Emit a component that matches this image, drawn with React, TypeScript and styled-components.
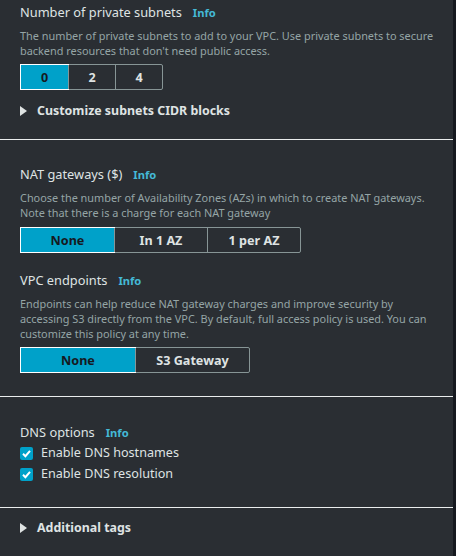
import * as React from 'react';
import styled, { createGlobalStyle } from 'styled-components';

const GlobalStyle = createGlobalStyle`
    html, body {
        margin: 0;
        padding: 0;
        background-color: #2a2e33;
    }
    body {
        font-family: "Noto Sans", "Open Sans", sans-serif;
        color: #d5dbdb;
    }
`

const Page = styled.div`
    width: 453px;
    min-height: 556px;
    border-right: 3px solid #16191f;
    background-color: #2a2e33;
`

const Section = styled.div<{ $top: number; $bottom: number }>`
    padding: ${p => p.$top}px 14px ${p => p.$bottom}px 20px;
`

const Divider = styled.div`
    height: 1px;
    background-color: #eaeded;
`

const Field = styled.div<{ $gap?: number }>`
    margin-top: ${p => p.$gap || 0}px;
`

const Label = styled.div`
    display: flex;
    align-items: baseline;
    font-size: 12.8px;
    line-height: 19px;
    height: 19px;
    color: #dfe3e3;
`

const Info = styled.span`
    margin-left: 11px;
    font-size: 11.2px;
    font-weight: 700;
    color: #44b9d6;
`

const Description = styled.div`
    margin-top: 6px;
    font-size: 10.9px;
    line-height: 15px;
    color: #95a5a6;
`

const SegmentGroup = styled.div<{ $gap: number }>`
    display: inline-flex;
    margin-top: ${p => p.$gap}px;
    border: 1px solid #879596;
    border-radius: 2px;
`

const Segment = styled.div<{ $width: number; $selected?: boolean }>`
    box-sizing: border-box;
    width: ${p => p.$width}px;
    height: 24px;
    display: flex;
    align-items: center;
    justify-content: center;
    font-size: 12.6px;
    font-weight: 700;
    color: ${p => (p.$selected ? '#16191f' : '#dfe3e3')};
    background-color: ${p => (p.$selected ? '#00a1c9' : 'transparent')};
    outline: ${p => (p.$selected ? '1px solid #ffffff' : 'none')};
    & + & {
        border-left: 1px solid #879596;
    }
`

const Expander = styled.div<{ $gap: number }>`
    margin-top: ${p => p.$gap}px;
    display: flex;
    align-items: center;
    gap: 10px;
    font-size: 12.4px;
    line-height: 19px;
    font-weight: 700;
    color: #dfe3e3;
`

const Caret = styled.span`
    width: 0;
    height: 0;
    border-top: 5px solid transparent;
    border-bottom: 5px solid transparent;
    border-left: 7px solid #dfe3e3;
`

const CheckRow = styled.label`
    display: flex;
    align-items: center;
    gap: 8px;
    margin-top: 1px;
    font-size: 12.6px;
    line-height: 20px;
    color: #dfe3e3;
`

const Box = styled.span`
    width: 13px;
    height: 13px;
    border-radius: 2px;
    background-color: #00a1c9;
    display: flex;
    align-items: center;
    justify-content: center;
`

const Checkbox = () => (
    <Box>
        <svg width="11" height="11" viewBox="0 0 11 11">
            <path d="M2 5.8 L4.4 8.2 L9 2.8" fill="none" stroke="#ffffff" strokeWidth="2" />
        </svg>
    </Box>
)

interface SegmentedProps {
    options: string[];
    width: number;
    gap: number;
}

const Segmented = ({ options, width, gap }: SegmentedProps) => (
    <div>
        <SegmentGroup $gap={gap}>
            {options.map((o, i) => (
                <Segment key={o} $width={width} $selected={i === 0}>{o}</Segment>
            ))}
        </SegmentGroup>
    </div>
)

const FieldLabel = ({ text }: { text: string }) => (
    <Label>
        <span>{text}</span>
        <Info>Info</Info>
    </Label>
)

export default function App() {
    return (
        <Page>
            <GlobalStyle />
            <Section $top={3} $bottom={19}>
                <FieldLabel text="Number of private subnets" />
                <Description>
                    The number of private subnets to add to your VPC. Use private subnets to secure backend resources that don't need public access.
                </Description>
                <Segmented options={['0', '2', '4']} width={47} gap={6} />
                <Expander $gap={11}>
                    <Caret />
                    <span>Customize subnets CIDR blocks</span>
                </Expander>
            </Section>
            <Divider />
            <Section $top={25} $bottom={23}>
                <FieldLabel text="NAT gateways ($)" />
                <Description>
                    Choose the number of Availability Zones (AZs) in which to create NAT gateways. Note that there is a charge for each NAT gateway
                </Description>
                <Segmented options={['None', 'In 1 AZ', '1 per AZ']} width={93} gap={7} />
                <Field $gap={18}>
                    <FieldLabel text="VPC endpoints" />
                    <Description>
                        Endpoints can help reduce NAT gateway charges and improve security by accessing S3 directly from the VPC. By default, full access policy is used. You can customize this policy at any time.
                    </Description>
                    <Segmented options={['None', 'S3 Gateway']} width={114} gap={6} />
                </Field>
            </Section>
            <Divider />
            <Section $top={26} $bottom={23}>
                <FieldLabel text="DNS options" />
                <CheckRow><Checkbox />Enable DNS hostnames</CheckRow>
                <CheckRow><Checkbox />Enable DNS resolution</CheckRow>
            </Section>
            <Divider />
            <Section $top={10} $bottom={19}>
                <Expander $gap={0}>
                    <Caret />
                    <span>Additional tags</span>
                </Expander>
            </Section>
        </Page>
    );
}
